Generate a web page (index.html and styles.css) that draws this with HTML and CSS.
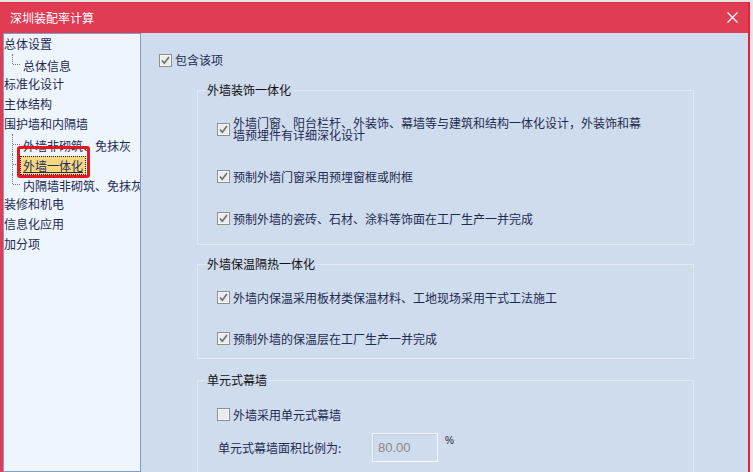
FILE: index.html
```html
<!DOCTYPE html>
<html lang="zh-CN">
<head>
  <meta charset="UTF-8" />
  <title>深圳装配率计算</title>
  <link rel="stylesheet" href="styles.css">
</head>
<body>
  <div class="window">
    <div class="titlebar">
      <span class="title">深圳装配率计算</span>
      <svg class="close" width="11" height="11" viewBox="0 0 11 11">
        <path d="M0.5 0.5 L10.5 10.5 M10.5 0.5 L0.5 10.5" stroke="#fff" stroke-width="1.3" fill="none"/>
      </svg>
    </div>
    <div class="main">
      <div class="tree">
        <ul>
          <li class="root">总体设置</li>
          <li class="child last"><span>总体信息</span></li>
          <li class="root">标准化设计</li>
          <li class="root">主体结构</li>
          <li class="root">围护墙和内隔墙</li>
          <li class="child"><span>外墙非砌筑、免抹灰</span></li>
          <li class="child"><span class="selected">外墙一体化</span></li>
          <li class="child last"><span>内隔墙非砌筑、免抹灰</span></li>
          <li class="root">装修和机电</li>
          <li class="root">信息化应用</li>
          <li class="root">加分项</li>
        </ul>
        <div class="mark"></div>
      </div>

      <div class="content">
        <div class="opt top">
          <span class="cb on"><svg width="11" height="11" viewBox="0 0 11 11"><path d="M2 5.5 L4.3 8.3 L9 2" stroke="#6f6f6f" stroke-width="1.6" fill="none"/></svg></span>
          <span class="txt">包含该项</span>
        </div>

        <fieldset class="group g1">
          <legend>外墙装饰一体化</legend>
          <div class="opt">
            <span class="cb on"><svg width="11" height="11" viewBox="0 0 11 11"><path d="M2 5.5 L4.3 8.3 L9 2" stroke="#6f6f6f" stroke-width="1.6" fill="none"/></svg></span>
            <span class="txt">外墙门窗、阳台栏杆、外装饰、幕墙等与建筑和结构一体化设计，外装饰和幕墙预埋件有详细深化设计</span>
          </div>
          <div class="opt">
            <span class="cb on"><svg width="11" height="11" viewBox="0 0 11 11"><path d="M2 5.5 L4.3 8.3 L9 2" stroke="#6f6f6f" stroke-width="1.6" fill="none"/></svg></span>
            <span class="txt">预制外墙门窗采用预埋窗框或附框</span>
          </div>
          <div class="opt">
            <span class="cb on"><svg width="11" height="11" viewBox="0 0 11 11"><path d="M2 5.5 L4.3 8.3 L9 2" stroke="#6f6f6f" stroke-width="1.6" fill="none"/></svg></span>
            <span class="txt">预制外墙的瓷砖、石材、涂料等饰面在工厂生产一并完成</span>
          </div>
        </fieldset>

        <fieldset class="group g2">
          <legend>外墙保温隔热一体化</legend>
          <div class="opt">
            <span class="cb on"><svg width="11" height="11" viewBox="0 0 11 11"><path d="M2 5.5 L4.3 8.3 L9 2" stroke="#6f6f6f" stroke-width="1.6" fill="none"/></svg></span>
            <span class="txt">外墙内保温采用板材类保温材料、工地现场采用干式工法施工</span>
          </div>
          <div class="opt">
            <span class="cb on"><svg width="11" height="11" viewBox="0 0 11 11"><path d="M2 5.5 L4.3 8.3 L9 2" stroke="#6f6f6f" stroke-width="1.6" fill="none"/></svg></span>
            <span class="txt">预制外墙的保温层在工厂生产一并完成</span>
          </div>
        </fieldset>

        <fieldset class="group g3">
          <legend>单元式幕墙</legend>
          <div class="opt">
            <span class="cb"></span>
            <span class="txt">外墙采用单元式幕墙</span>
          </div>
          <div class="ratio">
            <span class="ratio-label">单元式幕墙面积比例为:</span>
            <span class="ratio-input">80.00</span>
            <span class="unit">%</span>
          </div>
        </fieldset>
      </div>
    </div>
  </div>
</body>
</html>
```

FILE: styles.css
```css
body {
  margin: 0;
  background: #e6e6e6;
  font-family: "Noto Sans CJK SC", "Noto Sans", sans-serif;
  font-size: 12px;
  overflow: hidden;
}
.window {
  width: 745px;
  height: 469px;
  margin-top: 2px;
  border-top: 1px solid #e32b42;
  border-left: 3px solid #e23b52;
  border-right: 2px solid #e8213b;
  background: #cfdcee;
}
.titlebar {
  height: 30px;
  background: #e03c54;
  display: flex;
  align-items: center;
  justify-content: space-between;
  padding: 0 10px 0 7px;
}
.title {
  color: #fff;
  font-size: 12px;
  line-height: 14px;
  margin-top: -1px;
}
.close { display: block; margin-top: -1px; }

.main {
  display: flex;
  height: 439px;
  overflow: hidden;
}
.tree {
  position: relative;
  width: 136px;
  border: 1px solid #7f9ec4;
  background: #eff5fd;
  overflow: hidden;
}
.tree ul {
  list-style: none;
  margin: 0;
  padding: 0;
}
.tree li {
  height: 20px;
  line-height: 20px;
  white-space: nowrap;
  color: #1d2b52;
}
.tree .child {
  position: relative;
  padding-left: 16px;
}
.tree .child::before {
  content: "";
  position: absolute;
  left: 8px;
  top: 0;
  height: 20px;
  border-left: 1px dotted #7a7a7a;
}
.tree .child.last::before { height: 10px; }
.tree .child::after {
  content: "";
  position: absolute;
  left: 9px;
  top: 10px;
  width: 7px;
  border-top: 1px dotted #7a7a7a;
}
.tree .child span {
  display: inline-block;
  line-height: 17px;
  padding: 0 2px;
  border: 1px solid transparent;
  vertical-align: middle;
}
.tree .child .selected {
  background: #f6d97f;
  border: 1px dotted #222;
  text-decoration: underline;
  color: #1d2b60;
}
.mark {
  position: absolute;
  left: 13px;
  top: 112px;
  width: 73px;
  height: 32px;
  box-sizing: border-box;
  border: 3px solid #e8171f;
  border-radius: 3px;
}

.content {
  flex: 1;
  padding: 20px 0 0 18px;
  color: #1e2b50;
}
.opt {
  display: flex;
  align-items: center;
  line-height: 12px;
}
.opt.top {
  line-height: 14px;
}
.cb {
  flex: none;
  width: 11px;
  height: 11px;
  border: 1px solid #8e8e8e;
  background: #e9ecef;
  box-shadow: inset 0 0 0 1px #f6f7f8;
  margin-right: 3px;
}
.cb svg { display: block; }
.txt { width: 410px; }

.group {
  box-sizing: border-box;
  width: 497px;
  margin: 11px 0 0 38px;
  padding: 19px 0 19px 8px;
  border: 1px solid #e1e8f1;
  min-width: 0;
}
.group legend {
  padding: 0 1px;
  line-height: 16px;
  color: #111;
}
.group .opt { margin-left: 11px; }
.group .opt + .opt { margin-top: 29px; }
.g1 { margin-top: 15px; }
.g2 { padding-bottom: 13px; }
.g2 .opt + .opt { margin-top: 28px; }
.g3 { margin-top: 13px; padding-top: 20px; height: 120px; }

.ratio {
  display: flex;
  align-items: center;
  margin: 12px 0 0 12px;
}
.ratio-label { width: 154px; }
.ratio-input {
  box-sizing: border-box;
  width: 66px;
  height: 29px;
  line-height: 27px;
  padding-left: 5px;
  border: 1px solid #f5f8fc;
  box-shadow: inset 1px 1px 0 #c3cfde;
  font-family: "Liberation Sans", Arial, sans-serif;
  font-size: 13px;
  color: #8a8a8a;
}
.unit {
  align-self: flex-start;
  margin: 2px 0 0 7px;
  font-family: "Liberation Sans", Arial, sans-serif;
  font-size: 10px;
  color: #222;
}
```
